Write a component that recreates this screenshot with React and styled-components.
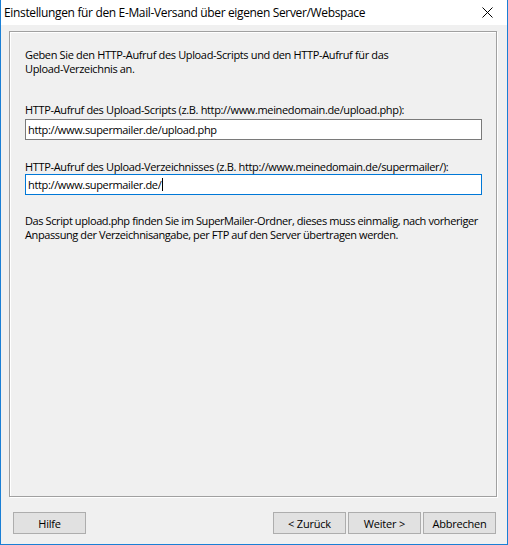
import React from 'react';
import styled, { createGlobalStyle } from 'styled-components';

const GlobalStyle = createGlobalStyle`
  html, body {
    margin: 0;
    padding: 0;
    background: #ffffff;
  }
  body {
    font-family: "Open Sans", "Noto Sans", sans-serif;
    color: #000;
    letter-spacing: -0.35px;
  }
`;

const App = () => {
  return (
    <>
      <GlobalStyle />
      <Window>
        <TitleBar>
          <Title>Einstellungen für den E-Mail-Versand über eigenen Server/Webspace</Title>
          <CloseButton aria-label="Schließen">
            <svg width="11" height="11" viewBox="0 0 11 11">
              <path d="M0.5 0.5 L10.5 10.5 M10.5 0.5 L0.5 10.5" stroke="#000" strokeWidth="1" fill="none" />
            </svg>
          </CloseButton>
        </TitleBar>
        <Body>
          <Panel>
            <Text $lh={14}>
              Geben Sie den HTTP-Aufruf des Upload-Scripts und den HTTP-Aufruf für das
              <br />
              Upload-Verzeichnis an.
            </Text>
            <Text $top={27}>HTTP-Aufruf des Upload-Scripts (z.B. http://www.meinedomain.de/upload.php):</Text>
            <Field $top={3}>http://www.supermailer.de/upload.php</Field>
            <Text $top={20}>HTTP-Aufruf des Upload-Verzeichnisses (z.B. http://www.meinedomain.de/supermailer/):</Text>
            <Field $top={1} $focused>
              http://www.supermailer.de/<Caret />
            </Field>
            <Text $top={19} $lh={14} $tight>
              Das Script upload.php finden Sie im SuperMailer-Ordner, dieses muss einmalig, nach vorheriger
              <br />
              Anpassung der Verzeichnisangabe, per FTP auf den Server übertragen werden.
            </Text>
          </Panel>
        </Body>
        <Footer>
          <Button>Hilfe</Button>
          <Spacer />
          <Button>&lt; Zurück</Button>
          <Button>Weiter &gt;</Button>
          <Button>Abbrechen</Button>
        </Footer>
      </Window>
    </>
  );
};

export default App;

const Window = styled.div`
  width: 508px;
  height: 545px;
  box-sizing: border-box;
  border: 1px solid #1a7fd5;
  border-top: none;
  background: #f0f0f0;
  display: flex;
  flex-direction: column;
`;

const TitleBar = styled.div`
  height: 25px;
  flex: none;
  background: #ffffff;
  display: flex;
  align-items: center;
  justify-content: space-between;
  padding-left: 3px;
`;

const Title = styled.div`
  font-size: 12px;
  line-height: 16px;
  white-space: nowrap;
`;

const CloseButton = styled.div`
  width: 34px;
  height: 25px;
  display: flex;
  align-items: center;
  justify-content: center;
  margin-right: 3px;
`;

const Body = styled.div`
  flex: 1;
  display: flex;
  padding: 6px 10px 0 8px;
`;

const Panel = styled.div`
  flex: 1;
  border: 1px solid #a0a0a0;
  box-shadow: 1px 1px 0 #ffffff, inset 1px 1px 0 #ffffff;
  padding: 16px 14px 0 15px;
  display: flex;
  flex-direction: column;
  align-items: flex-start;
`;

const Text = styled.div`
  font-size: 11px;
  line-height: ${(p) => p.$lh || 13}px;
  margin-top: ${(p) => p.$top || 0}px;
  letter-spacing: ${(p) => (p.$tight ? '-0.4px' : '-0.35px')};
  white-space: nowrap;
`;

const Field = styled.div`
  margin-top: ${(p) => p.$top}px;
  width: 457px;
  height: 21px;
  box-sizing: border-box;
  background: #ffffff;
  border: 1px solid ${(p) => (p.$focused ? '#0078d7' : '#7a7a7a')};
  padding: 0 2px;
  font-size: 11px;
  line-height: 19px;
  display: flex;
  align-items: center;
  white-space: pre;
`;

const Caret = styled.span`
  display: inline-block;
  width: 1px;
  height: 13px;
  background: #000;
  margin-left: 1px;
`;

const Footer = styled.div`
  flex: none;
  display: flex;
  gap: 2px;
  padding: 15px 11px 10px 12px;
`;

const Spacer = styled.div`
  flex: 1;
`;

const Button = styled.div`
  width: 73px;
  height: 22px;
  box-sizing: border-box;
  background: #e1e1e1;
  border: 1px solid #adadad;
  display: flex;
  align-items: center;
  justify-content: center;
  font-size: 11px;
  letter-spacing: -0.2px;
  white-space: pre;
  color: #000;
`;
